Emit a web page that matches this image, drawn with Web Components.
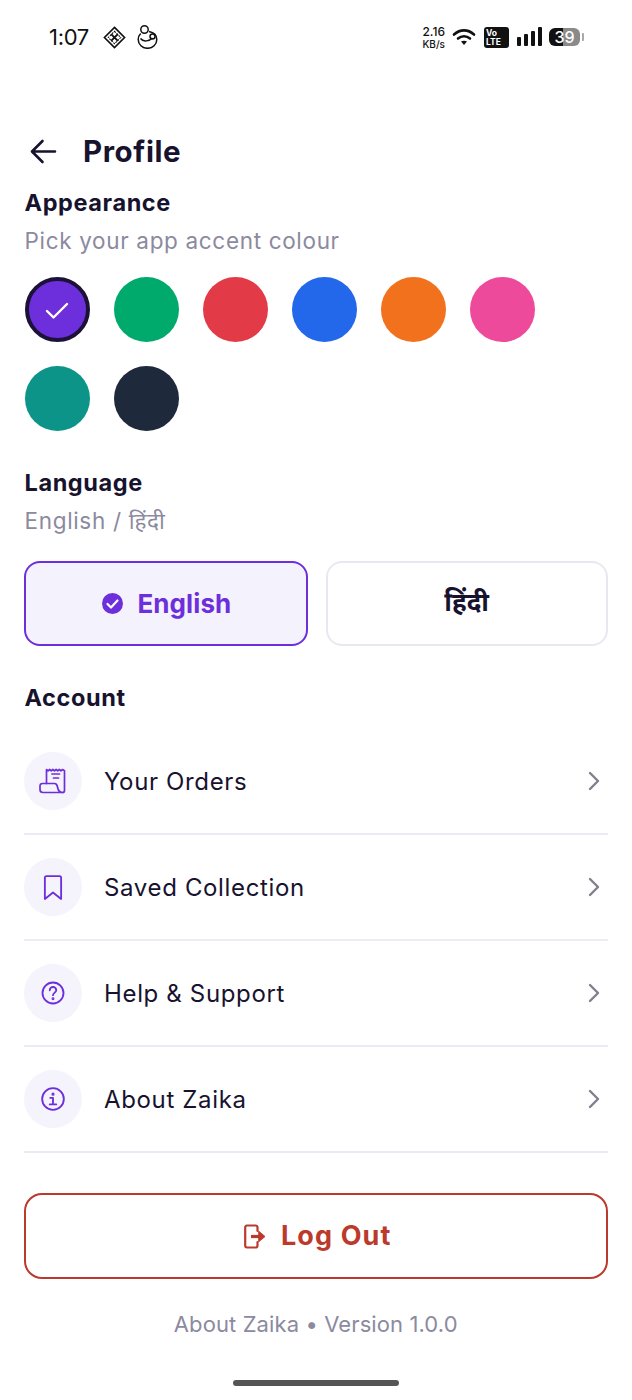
<!DOCTYPE html>
<html>
<head>
<meta charset="utf-8">
<style>
  html, body { margin: 0; background: #fff; }
  body { width: 632px; height: 1400px; overflow: hidden; font-family: Inter, "Noto Sans", sans-serif; color: #17132f; }
</style>
</head>
<body>
<status-bar></status-bar>
<profile-header>Profile</profile-header>
<main-content>
  <section-head title="Appearance" sub="Pick your app accent colour"></section-head>
  <swatch-grid></swatch-grid>
  <section-head class="lang" title="Language" sub="English / हिंदी"></section-head>
  <lang-picker></lang-picker>
  <section-head class="acct" title="Account"></section-head>
  <menu-row class="first" icon="orders">Your Orders</menu-row>
  <menu-row icon="saved">Saved Collection</menu-row>
  <menu-row icon="help">Help &amp; Support</menu-row>
  <menu-row icon="about">About Zaika</menu-row>
  <logout-button>Log Out</logout-button>
  <app-footer>About Zaika • Version 1.0.0</app-footer>
</main-content>
<home-bar></home-bar>

<script>
class StatusBar extends HTMLElement {
  connectedCallback() {
    this.attachShadow({ mode: "open" }).innerHTML = `
      <style>
        :host { display: flex; align-items: center; justify-content: space-between; height: 36px; padding: 19px 48px 0 49px; color: #111; }
        .left, .right { display: flex; align-items: center; }
        .time { font: 400 22px/36px Inter, sans-serif; letter-spacing: -0.3px; margin-right: 14px; }
        .speed { font: 500 10px/11px Inter, sans-serif; text-align: center; margin-right: 7px; }
        .speed b { display: block; font-weight: 500; font-size: 12px; line-height: 14px; }
        .speed span { display: block; }
        svg { display: block; }
        .volte { width: 25px; height: 21px; background: #111; color: #fff; border-radius: 3px; font: 700 8.5px/9px Inter, sans-serif; padding: 2px 0 0 2px; box-sizing: border-box; margin: 0 8px 0 8px; }
        .batt { position: relative; width: 31px; height: 18px; border-radius: 6px; background: linear-gradient(90deg, #111 0 45%, #8a8a8a 45%); color: #fff; font: 500 16px/18px Inter, sans-serif; text-align: center; margin-left: 7px; }
        .nub { width: 2px; height: 8px; background: #aaa; margin-left: 2px; border-radius: 0 1px 1px 0; }
      </style>
      <div class="left">
        <span class="time">1:07</span>
        <svg width="23" height="23" viewBox="0 0 24 24" fill="none" stroke="#111" stroke-width="1.700" style="margin-right:11px">
          <path d="M12 1.500 22.500 12 12 22.500 1.500 12Z"/>
          <path d="M12 5.500 18.500 12 12 18.500 5.500 12Z" stroke-width="1.100" stroke-dasharray="2 1"/>
          <path d="M8.500 8.500 15.500 15.500M15.500 8.500 8.500 15.500" stroke-width="2"/>
        </svg>
        <svg width="21" height="24" viewBox="0 0 21 24" fill="none" stroke="#111" stroke-width="1.500">
          <circle cx="7.500" cy="4.500" r="3.700"/>
          <path d="M12 6.500C16.500 7.500 19.800 10.500 19.800 14.500A9.300 8.800 0 0 1 1.200 14.500C1.200 12 2.200 10 3.700 8.500"/>
          <path d="M3.500 13.500C6.500 17.500 12.500 16 15.500 13"/>
          <circle cx="15.500" cy="11.500" r="2.500"/>
        </svg>
      </div>
      <div class="right">
        <div class="speed"><b>2.16</b><span>KB/s</span></div>
        <svg width="24" height="18" viewBox="0 0 24 18" fill="none" stroke="#111" stroke-width="2.600" stroke-linecap="round">
          <path d="M2 6.500C8 1 16 1 22 6.500"/>
          <path d="M6 10.500C9.500 7.500 14.500 7.500 18 10.500"/>
          <path d="M12 17 9 13.500C10.800 12.500 13.200 12.500 15 13.500Z" fill="#111" stroke="none"/>
        </svg>
        <div class="volte">Vo<br>LTE</div>
        <svg width="25" height="20" viewBox="0 0 25 20" fill="#111">
          <rect x="0" y="10" width="4" height="9" rx="1"/>
          <rect x="7" y="7" width="4" height="12" rx="1"/>
          <rect x="14" y="4" width="4" height="15" rx="1"/>
          <rect x="21" y="0" width="4" height="19" rx="1"/>
        </svg>
        <div class="batt">39</div><div class="nub"></div>
      </div>`;
  }
}

class ProfileHeader extends HTMLElement {
  connectedCallback() {
    this.attachShadow({ mode: "open" }).innerHTML = `
      <style>
        :host { display: flex; align-items: center; height: 40px; margin-top: 76px; padding-left: 30px; }
        svg { display: block; margin-right: 26px; }
        .t { font: 700 29.500px/40px Inter, sans-serif; letter-spacing: 0.6px; color: #17132f; }
      </style>
      <svg width="27" height="27" viewBox="0 0 27 27" fill="none" stroke="#17132f" stroke-width="2.600" stroke-linecap="round" stroke-linejoin="round">
        <path d="M25 13.500H2.500M12.500 3 2 13.500 12.500 24"/>
      </svg>
      <div class="t"><slot></slot></div>`;
  }
}

class MainContent extends HTMLElement {
  connectedCallback() {
    this.attachShadow({ mode: "open" }).innerHTML = `
      <style>:host { display: block; padding: 0 24.500px 0 24px; }</style>
      <slot></slot>`;
  }
}

class SectionHead extends HTMLElement {
  connectedCallback() {
    const sub = this.getAttribute("sub");
    let top = 17;
    if (this.classList.contains("lang")) top = 37;
    if (this.classList.contains("acct")) top = 37;
    this.attachShadow({ mode: "open" }).innerHTML = `
      <style>
        :host { display: block; padding-top: ${top}px; }
        .t { font: 700 23.500px/30px Inter, sans-serif; letter-spacing: 0.6px; color: #17132f; padding-left: .5px; }
        .s { font: 400 22.500px/30px Inter, "Noto Sans", sans-serif; letter-spacing: 0.67px; color: #8b8a9e; margin-top: 8px; padding-left: .5px; }
      </style>
      <div class="t">${this.getAttribute("title")}</div>
      ${sub ? `<div class="s">${sub}</div>` : ""}`;
  }
}

class SwatchGrid extends HTMLElement {
  connectedCallback() {
    const colors = ["#6d2fdb", "#00aa6c", "#e23b47", "#2368ea", "#f2711c", "#ee4a9b", "#0d9488", "#1e293b"];
    const items = colors.map((c, i) => `
      <div class="sw${i === 0 ? " on" : ""}" style="background:${c}">
        ${i === 0 ? `<svg width="26" height="26" viewBox="0 0 26 26" fill="none" stroke="#fff" stroke-width="2.400" stroke-linecap="round" stroke-linejoin="round"><path d="M3 14 9.500 20.500 23 7"/></svg>` : ""}
      </div>`).join("");
    this.attachShadow({ mode: "open" }).innerHTML = `
      <style>
        :host { display: flex; flex-wrap: wrap; gap: 24px; margin-top: 21px; padding-left: .5px; }
        .sw { width: 65px; height: 65px; border-radius: 50%; box-sizing: border-box; display: flex; align-items: center; justify-content: center; }
        .on { border: 4.500px solid #1c1238; }
      </style>
      ${items}`;
  }
}

class LangPicker extends HTMLElement {
  connectedCallback() {
    this.attachShadow({ mode: "open" }).innerHTML = `
      <style>
        :host { display: flex; gap: 18px; margin-top: 25px; }
        .b { flex: 1; height: 85px; box-sizing: border-box; border-radius: 16px; display: flex; align-items: center; justify-content: center; border: 2px solid #e8e8f2; background: #fff; }
        .on { border-color: #6d2fdb; background: #f4f2fc; color: #6d2fdb; font: 700 26px/30px Inter, sans-serif; letter-spacing: 0.1px; gap: 14px; padding-left: 2px; }
        .hi { font: 700 26px/30px "Noto Sans", sans-serif; color: #17132f; padding-bottom: 6px; box-sizing: border-box; }
        svg { display: block; }
      </style>
      <div class="b on">
        <svg width="21" height="21" viewBox="0 0 21 21"><circle cx="10.500" cy="10.500" r="10.500" fill="#6d2fdb"/><path d="M5.500 11 9 14.500 15.500 7.500" fill="none" stroke="#fff" stroke-width="2.200" stroke-linecap="round" stroke-linejoin="round"/></svg>
        English
      </div>
      <div class="b hi">हिंदी</div>`;
  }
}

const MENU_ICONS = {
  orders: { w: 28, h: 26, vb: "0 0 28 26", d: `<path d="M7.500 15.500V1.500L9.100 2.800 10.700 1.500 12.300 2.800 13.900 1.500 15.500 2.800 17.100 1.500 18.700 2.800 20.300 1.500 21.900 2.800 23.500 1.500 25.500 2.800V22.500A2 2 0 0 1 23.500 24.500"/><path d="M7.500 15.500H3.500A2.500 2.500 0 0 0 1 18V21.500A3 3 0 0 0 4 24.500H23.500C21 24.500 19 22 18.500 19 18.200 17 17.500 15.500 15.500 15.500H7.500"/><path d="M13 6H20.500M14.500 10H19.500"/>` },
  saved: { w: 26, h: 26, vb: "0 0 24 24", d: `<path d="M4.500 3.500A1.500 1.500 0 0 1 6 2H18A1.500 1.500 0 0 1 19.500 3.500V23L12 17 4.500 23Z"/>` },
  help: { w: 26, h: 26, vb: "0 0 24 24", d: `<circle cx="12" cy="12" r="9.700"/><path d="M9 9.500A3 3 0 0 1 15 9.500C15 11.500 12 11.800 12 14"/><circle cx="12" cy="17.300" r=".5" fill="#6d2fdb"/>` },
  about: { w: 26, h: 26, vb: "0 0 24 24", d: `<circle cx="12" cy="12" r="10"/><path d="M9.500 11H12V17M9 17H15"/><circle cx="12" cy="7.500" r=".6" fill="#6d2fdb"/>` },
};

class MenuRow extends HTMLElement {
  connectedCallback() {
    const icon = MENU_ICONS[this.getAttribute("icon")];
    const first = this.classList.contains("first");
    this.attachShadow({ mode: "open" }).innerHTML = `
      <style>
        :host { display: flex; align-items: center; height: 106px; box-sizing: border-box; border-bottom: 2px solid #ecebf5; padding: 0 8px 0 0; margin-top: ${first ? 16 : 0}px; font: 400 24px/30px Inter, sans-serif; letter-spacing: 0.65px; color: #17132f; }
        .ic { width: 58px; height: 58px; border-radius: 50%; background: #f5f3fc; display: flex; align-items: center; justify-content: center; margin-right: 22px; }
        .ic svg { display: block; }
        .l { flex: 1; padding-top: 2px; }
        .ch { display: block; }
      </style>
      <div class="ic">
        <svg width="${icon.w}" height="${icon.h}" viewBox="${icon.vb}" fill="none" stroke="#6d2fdb" stroke-width="1.700" stroke-linecap="round" stroke-linejoin="round">${icon.d}</svg>
      </div>
      <div class="l"><slot></slot></div>
      <svg class="ch" width="12" height="20" viewBox="0 0 12 20" fill="none" stroke="#7f7f8e" stroke-width="2.400" stroke-linecap="round" stroke-linejoin="round"><path d="M2 2 10 10 2 18"/></svg>`;
  }
}

class LogoutButton extends HTMLElement {
  connectedCallback() {
    this.attachShadow({ mode: "open" }).innerHTML = `
      <style>
        :host { display: flex; align-items: center; justify-content: center; gap: 15px; height: 86px; box-sizing: border-box; margin-top: 40px; padding-left: 4px; border: 2px solid #bb3a2b; border-radius: 18px; color: #bb3a2b; font: 700 27px/32px Inter, sans-serif; letter-spacing: 1.1px; }
        svg { display: block; }
      </style>
      <svg width="22" height="25" viewBox="0 0 22 25" fill="none" stroke="#bb3a2b" stroke-width="2.200" stroke-linecap="round" stroke-linejoin="round">
        <path d="M13.500 7V3A2 2 0 0 0 11.500 1.500H3A2 2 0 0 0 1.200 3.500V21.500A2 2 0 0 0 3 23.500H11.500A2 2 0 0 0 13.500 21.500V18"/>
        <path d="M7 12.500H15" stroke-width="3.200" stroke-linecap="butt"/><path d="M15 7.500 21 12.500 15 17.500Z" fill="#bb3a2b" stroke-width="1"/>
      </svg>
      <slot></slot>`;
  }
}

class AppFooter extends HTMLElement {
  connectedCallback() {
    this.attachShadow({ mode: "open" }).innerHTML = `
      <style>:host { display: block; text-align: center; margin-top: 30px; font: 400 22px/30px Inter, sans-serif; letter-spacing: 0.1px; color: #8b8a9e; }</style>
      <slot></slot>`;
  }
}

class HomeBar extends HTMLElement {
  connectedCallback() {
    this.attachShadow({ mode: "open" }).innerHTML = `
      <style>
        :host { display: flex; justify-content: center; margin-top: 41px; }
        div { width: 166px; height: 6px; border-radius: 3px; background: #555; }
      </style>
      <div></div>`;
  }
}

customElements.define("status-bar", StatusBar);
customElements.define("profile-header", ProfileHeader);
customElements.define("main-content", MainContent);
customElements.define("section-head", SectionHead);
customElements.define("swatch-grid", SwatchGrid);
customElements.define("lang-picker", LangPicker);
customElements.define("menu-row", MenuRow);
customElements.define("logout-button", LogoutButton);
customElements.define("app-footer", AppFooter);
customElements.define("home-bar", HomeBar);
</script>
</body>
</html>
